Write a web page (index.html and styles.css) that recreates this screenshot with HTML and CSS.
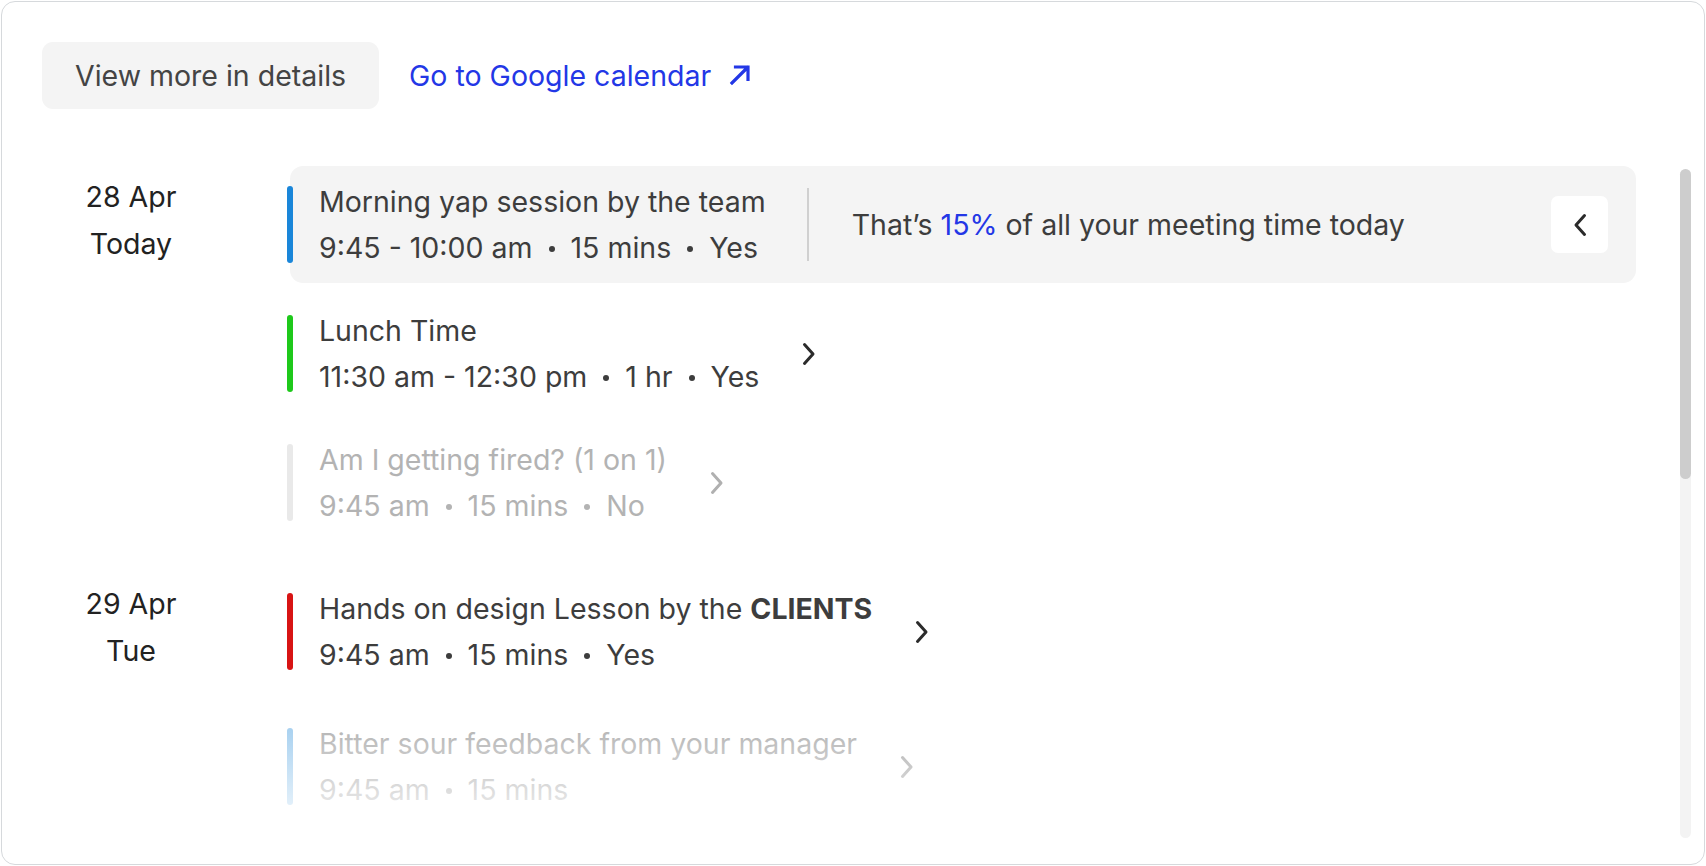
FILE: index.html
```html
<!DOCTYPE html>
<html lang="en">
<head>
<meta charset="utf-8">
<title>Meetings</title>
<link rel="stylesheet" href="styles.css">
</head>
<body>
<div class="card">
  <div class="actions">
    <button class="btn-details">View more in details</button>
    <a class="gcal-link" href="#">Go to Google calendar
      <svg class="ext-icon" width="24" height="24" viewBox="0 0 24 24" fill="none"><path d="M4 20L19.5 4.5M7.5 4H20V16.5" stroke="currentColor" stroke-width="3.2" stroke-linecap="square"/></svg>
    </a>
  </div>
  <div class="body">
    <div class="content">
      <div class="group">
        <div class="date"><span>28 Apr</span><span>Today</span></div>
        <div class="events">
          <div class="event active">
            <span class="bar bar-blue"></span>
            <div class="info">
              <span class="title">Morning yap session by the team</span>
              <span class="meta">9:45 - 10:00 am<i class="dot"></i>15 mins<i class="dot"></i>Yes</span>
            </div>
            <span class="divider"></span>
            <span class="summary">That’s <b class="pct">15%</b> of all your meeting time today</span>
            <span class="back-btn"><svg width="14" height="24" viewBox="0 0 14 24" fill="none"><path d="M11.5 2.5L3 12L11.5 21.5" stroke="#2b2b2b" stroke-width="3" stroke-linecap="round" stroke-linejoin="round"/></svg></span>
          </div>
          <div class="event">
            <span class="bar bar-green"></span>
            <div class="info">
              <span class="title">Lunch Time</span>
              <span class="meta">11:30 am - 12:30 pm<i class="dot"></i>1 hr<i class="dot"></i>Yes</span>
            </div>
            <svg class="chev" width="14" height="24" viewBox="0 0 14 24" fill="none"><path d="M2.5 2.5L11 12L2.5 21.5" stroke="currentColor" stroke-width="3" stroke-linecap="round" stroke-linejoin="round"/></svg>
          </div>
          <div class="event declined">
            <span class="bar bar-gray"></span>
            <div class="info">
              <span class="title">Am I getting fired? (1 on 1)</span>
              <span class="meta">9:45 am<i class="dot"></i>15 mins<i class="dot"></i>No</span>
            </div>
            <svg class="chev" width="14" height="24" viewBox="0 0 14 24" fill="none"><path d="M2.5 2.5L11 12L2.5 21.5" stroke="currentColor" stroke-width="3" stroke-linecap="round" stroke-linejoin="round"/></svg>
          </div>
        </div>
      </div>
      <div class="group">
        <div class="date"><span>29 Apr</span><span>Tue</span></div>
        <div class="events">
          <div class="event">
            <span class="bar bar-red"></span>
            <div class="info">
              <span class="title">Hands on design Lesson by the <b>CLIENTS</b></span>
              <span class="meta">9:45 am<i class="dot"></i>15 mins<i class="dot"></i>Yes</span>
            </div>
            <svg class="chev" width="14" height="24" viewBox="0 0 14 24" fill="none"><path d="M2.5 2.5L11 12L2.5 21.5" stroke="currentColor" stroke-width="3" stroke-linecap="round" stroke-linejoin="round"/></svg>
          </div>
          <div class="event faded">
            <span class="bar bar-blue"></span>
            <div class="info">
              <span class="title">Bitter sour feedback from your manager</span>
              <span class="meta">9:45 am<i class="dot"></i>15 mins</span>
            </div>
            <svg class="chev" width="14" height="24" viewBox="0 0 14 24" fill="none"><path d="M2.5 2.5L11 12L2.5 21.5" stroke="currentColor" stroke-width="3" stroke-linecap="round" stroke-linejoin="round"/></svg>
          </div>
        </div>
      </div>
      <div class="fade"></div>
    </div>
    <div class="scrollbar"><div class="thumb"></div></div>
  </div>
</div>
</body>
</html>
```

FILE: styles.css
```css
* { box-sizing: border-box; }
html, body { margin: 0; padding: 0; background: #ffffff; }
body {
  font-family: Inter, "Noto Sans", "Liberation Sans", sans-serif;
  color: #3d3d3d;
}
.card {
  margin: 1px;
  width: 1704px;
  height: 864px;
  border: 1px solid #d6d9dc;
  border-radius: 14px;
  background: #ffffff;
  display: flex;
  flex-direction: column;
  overflow: hidden;
}
.actions {
  display: flex;
  align-items: center;
  gap: 30px;
  padding: 40px 40px 0 40px;
}
.btn-details {
  height: 67px;
  padding: 0 33px;
  border: none;
  border-radius: 11px;
  background: #f4f4f4;
  font-family: inherit;
  font-size: 28.5px;
  color: #444444;
}
.gcal-link {
  display: flex;
  align-items: center;
  gap: 17px;
  font-size: 28.5px;
  color: #2337e6;
  text-decoration: none;
}
.ext-icon { display: block; margin-top: -1px; }
.body {
  display: flex;
  margin-top: 57px;
  height: 672px;
}
.content {
  flex: 1;
  position: relative;
  overflow: hidden;
  display: flex;
  flex-direction: column;
  gap: 32px;
}
.group {
  display: grid;
  grid-template-columns: 258px 1fr;
  column-gap: 30px;
}
.date {
  display: flex;
  flex-direction: column;
  align-items: center;
  gap: 7px;
  padding-top: 11px;
  font-size: 28.5px;
  line-height: 40px;
  color: #222222;
}
.events {
  display: flex;
  flex-direction: column;
  gap: 12px;
}
.event {
  display: flex;
  align-items: center;
  height: 117px;
  padding-right: 28px;
  border-radius: 13px;
  color: #3d3d3d;
}
.event.active { background: #f4f4f4; }
.event.declined { color: #b3b3b3; }
.event.faded { opacity: 0.45; margin-top: 6px; }
.bar {
  flex: none;
  width: 6px;
  height: 77px;
  margin-left: -3px;
  border-radius: 3px;
}
.bar-blue { background: #1a86d9; }
.bar-green { background: #1ec91b; }
.bar-gray { background: #e9e9e9; }
.bar-red { background: #d81414; }
.info {
  display: flex;
  flex-direction: column;
  gap: 6px;
  margin-left: 26px;
  font-size: 28.5px;
  line-height: 40px;
  white-space: nowrap;
}
.info b { font-weight: 700; }
.meta { display: flex; align-items: center; }
.dot {
  display: inline-block;
  width: 6px;
  height: 6px;
  border-radius: 50%;
  background: currentColor;
  margin: 2px 16px 0 16px;
}
.divider {
  flex: none;
  width: 2px;
  height: 73px;
  margin-left: 41px;
  background: #d0d0d0;
}
.summary {
  flex: 1;
  margin-left: 43px;
  font-size: 28.5px;
  color: #3d3d3d;
  white-space: nowrap;
}
.pct { font-weight: 400; color: #2337e6; }
.back-btn {
  flex: none;
  width: 57px;
  height: 57px;
  border-radius: 7px;
  background: #ffffff;
  display: flex;
  align-items: center;
  justify-content: center;
}
.chev {
  flex: none;
  margin-left: 43px;
  color: #2b2b2b;
}
.event.declined .chev { color: #b0b0b0; }
.fade {
  position: absolute;
  left: 0;
  right: 0;
  bottom: 0;
  height: 135px;
  background: linear-gradient(to bottom, rgba(255,255,255,0) 0%, rgba(255,255,255,0.95) 100%);
  pointer-events: none;
}
.scrollbar {
  flex: none;
  width: 11px;
  margin: 3px 13px 0 44px;
  height: 669px;
  background: #f3f3f3;
  border-radius: 6px;
}
.thumb {
  height: 310px;
  background: #cdcdcd;
  border-radius: 6px;
}
```
